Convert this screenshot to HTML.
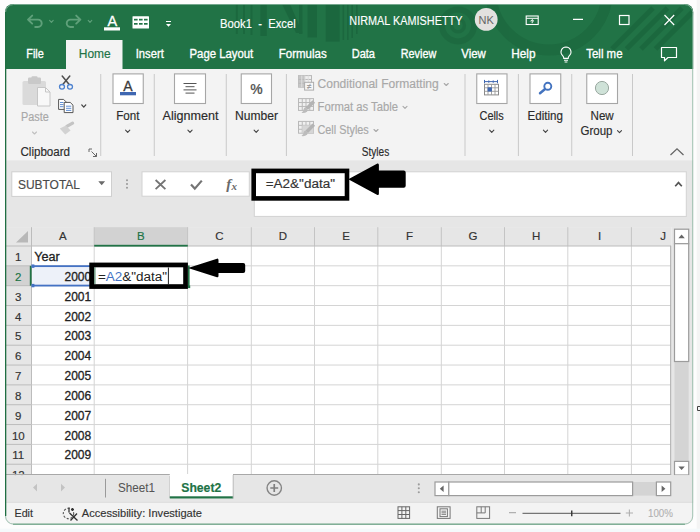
<!DOCTYPE html>
<html><head><meta charset="utf-8"><title>Book1 - Excel</title>
<style>
html,body{margin:0;padding:0;background:#fdfdfd;width:700px;height:532px;overflow:hidden}
svg{display:block;font-family:"Liberation Sans",sans-serif}
text{white-space:pre}
</style></head><body>
<svg width="700" height="532" viewBox="0 0 700 532">
<clipPath id="win"><rect x="5" y="4" width="688.2" height="520.6" rx="8"/></clipPath>
<g clip-path="url(#win)">
<rect x="0" y="0" width="700" height="532" fill="#f3f3f3" />
<rect x="0" y="0" width="700" height="69" fill="#217346" />
<g opacity="0.27">
<rect x="235.8" y="4" width="2" height="30" fill="#0e4a2a" />
<rect x="243" y="4" width="2" height="30" fill="#0e4a2a" />
<rect x="250.5" y="4" width="2" height="31" fill="#0e4a2a" />
<rect x="260.4" y="4" width="6.4" height="32" fill="#0e4a2a" />
<rect x="299" y="4" width="3.5" height="30" fill="#0e4a2a" />
<rect x="307.5" y="4" width="9.5" height="33.5" fill="#0e4a2a" />
<rect x="325.7" y="4" width="14" height="37.6" fill="#0e4a2a" />
<rect x="342.5" y="4" width="1.6" height="36" fill="#0e4a2a" />
<rect x="347" y="4" width="1.6" height="36" fill="#0e4a2a" />
<rect x="351.4" y="4" width="1.6" height="34" fill="#0e4a2a" />
<rect x="356" y="4" width="1.6" height="30" fill="#0e4a2a" />
<path d="M282 4 L290 4 L302.5 33 L296 33 Z" fill="#0e4a2a" />
</g>
<g fill="none" opacity="0.2">
<circle cx="458" cy="25.4" r="6.4" stroke="#0e4a2a" stroke-width="3.4"/>
<circle cx="458" cy="25.4" r="16" stroke="#0e4a2a" stroke-width="6"/>
<circle cx="549" cy="-8" r="58" stroke="#0e4a2a" stroke-width="11"/>
</g>
<g fill="none" opacity="0.27">
<line x1="612.0" y1="49" x2="653.0" y2="8" stroke="#0e4a2a" stroke-width="5.2" />
<line x1="626.5" y1="49" x2="667.5" y2="8" stroke="#0e4a2a" stroke-width="5.2" />
<line x1="641.0" y1="49" x2="682.0" y2="8" stroke="#0e4a2a" stroke-width="5.2" />
<line x1="655.5" y1="49" x2="696.5" y2="8" stroke="#0e4a2a" stroke-width="5.2" />
</g>
<path d="M28 19.6 L32.2 15.6 M28 19.6 L32.2 23.6 M28 19.6 H38 a3.7 3.7 0 0 1 0 7.4 H35.2" fill="none" stroke="#5fa07a" stroke-width="1.9" stroke-linecap="round" stroke-linejoin="round"/>
<path d="M49.6 20.3 L51.4 22.3 L53.199999999999996 20.3" fill="none" stroke="#5fa07a" stroke-width="1.1" stroke-linecap="round" stroke-linejoin="round"/>
<path d="M80.4 19.6 L76.2 15.6 M80.4 19.6 L76.2 23.6 M80.4 19.6 H70.4 a3.7 3.7 0 0 0 0 7.4 H73.2" fill="none" stroke="#5fa07a" stroke-width="1.9" stroke-linecap="round" stroke-linejoin="round"/>
<path d="M88.2 20.3 L90 22.3 L91.8 20.3" fill="none" stroke="#5fa07a" stroke-width="1.1" stroke-linecap="round" stroke-linejoin="round"/>
<text x="112.3" y="25.8" font-size="14.5" fill="#fff" stroke="#fff" stroke-width="0.3" text-anchor="middle" >A</text>
<rect x="104" y="27.3" width="16" height="3.2" fill="#fff" />
<rect x="132.5" y="16.2" width="16.5" height="12.4" fill="#fff" rx="0.6" />
<rect x="134" y="18.8" width="3.6" height="1.7" fill="#217346" />
<rect x="139" y="18.8" width="3.6" height="1.7" fill="#217346" />
<rect x="144" y="18.8" width="3.6" height="1.7" fill="#217346" />
<rect x="134" y="23.0" width="3.6" height="1.7" fill="#217346" />
<rect x="139" y="23.0" width="3.6" height="1.7" fill="#217346" />
<rect x="144" y="23.0" width="3.6" height="1.7" fill="#217346" />
<line x1="166" y1="21.5" x2="171" y2="21.5" stroke="#fff" stroke-width="1.2" />
<path d="M166 24 L171 24 L168.5 26.8 Z" fill="#fff" />
<text x="220" y="28" font-size="12" fill="#fff" stroke="#fff" stroke-width="0.12" textLength="75.75" lengthAdjust="spacingAndGlyphs" >Book1  -  Excel</text>
<text x="349.3" y="24.7" font-size="12" fill="#fff" stroke="#fff" stroke-width="0.12" textLength="113.2" lengthAdjust="spacingAndGlyphs" >NIRMAL KAMISHETTY</text>
<circle cx="486.2" cy="19.4" r="11.4" fill="#e3e1df"/>
<text x="486.2" y="23.6" font-size="11" fill="#666" text-anchor="middle" >NK</text>
<rect x="526.2" y="16" width="12" height="8.5" fill="none" stroke="#fff" stroke-width="1.1" />
<line x1="526.2" y1="18.3" x2="538.2" y2="18.3" stroke="#fff" stroke-width="1" />
<path d="M532.2 23.2 V19.8 M530.4 21.4 L532.2 19.6 L534 21.4" fill="none" stroke="#fff" stroke-width="1" />
<line x1="573" y1="19.3" x2="583" y2="19.3" stroke="#fff" stroke-width="1.2" />
<rect x="619.5" y="15.5" width="9.5" height="9" fill="none" stroke="#fff" stroke-width="1.2" />
<path d="M664.5 15 L674.2 25 M674.2 15 L664.5 25" fill="none" stroke="#fff" stroke-width="1.2" />
<rect x="66" y="40" width="56.5" height="30" fill="#f3f3f3" />
<text x="26.25" y="58.2" font-size="12" fill="#fff" stroke="#fff" stroke-width="0.32" textLength="17.5" lengthAdjust="spacingAndGlyphs" >File</text>
<text x="78.75" y="58.2" font-size="12" fill="#217346" stroke="#217346" stroke-width="0.16" textLength="32.0" lengthAdjust="spacingAndGlyphs" >Home</text>
<text x="135.75" y="58.2" font-size="12" fill="#fff" stroke="#fff" stroke-width="0.32" textLength="28.0" lengthAdjust="spacingAndGlyphs" >Insert</text>
<text x="189.5" y="58.2" font-size="12" fill="#fff" stroke="#fff" stroke-width="0.32" textLength="63.75" lengthAdjust="spacingAndGlyphs" >Page Layout</text>
<text x="278.75" y="58.2" font-size="12" fill="#fff" stroke="#fff" stroke-width="0.32" textLength="48.0" lengthAdjust="spacingAndGlyphs" >Formulas</text>
<text x="351.7" y="58.2" font-size="12" fill="#fff" stroke="#fff" stroke-width="0.32" textLength="23.3" lengthAdjust="spacingAndGlyphs" >Data</text>
<text x="400.75" y="58.2" font-size="12" fill="#fff" stroke="#fff" stroke-width="0.32" textLength="35.5" lengthAdjust="spacingAndGlyphs" >Review</text>
<text x="461.25" y="58.2" font-size="12" fill="#fff" stroke="#fff" stroke-width="0.32" textLength="24.5" lengthAdjust="spacingAndGlyphs" >View</text>
<text x="511.25" y="58.2" font-size="12" fill="#fff" stroke="#fff" stroke-width="0.32" textLength="24.25" lengthAdjust="spacingAndGlyphs" >Help</text>
<path d="M566 47 a5 5 0 0 1 3.2 8.8 c-0.8 0.8 -1 1.6 -1 2.6 h-4.4 c0 -1 -0.2 -1.8 -1 -2.6 a5 5 0 0 1 3.2 -8.8 Z M564 60.2 h4 M564.6 62 h2.8" fill="none" stroke="#fff" stroke-width="1.1" />
<text x="586.25" y="58.2" font-size="12" fill="#fff" stroke="#fff" stroke-width="0.32" textLength="36.25" lengthAdjust="spacingAndGlyphs" >Tell me</text>
<path d="M661.5 47.5 H676.5 V57.5 H668 L664.5 60.8 V57.5 H661.5 Z" fill="none" stroke="#fff" stroke-width="1.2" stroke-linejoin="round"/>
<rect x="0" y="69" width="700" height="92" fill="#f3f3f3" />
<line x1="100.75" y1="74" x2="100.75" y2="156" stroke="#c9c9c9" stroke-width="1" />
<line x1="154.25" y1="74" x2="154.25" y2="156" stroke="#c9c9c9" stroke-width="1" />
<line x1="226.25" y1="74" x2="226.25" y2="156" stroke="#c9c9c9" stroke-width="1" />
<line x1="286.4" y1="74" x2="286.4" y2="156" stroke="#c9c9c9" stroke-width="1" />
<line x1="465" y1="74" x2="465" y2="156" stroke="#c9c9c9" stroke-width="1" />
<line x1="518.4" y1="74" x2="518.4" y2="156" stroke="#c9c9c9" stroke-width="1" />
<line x1="571.75" y1="74" x2="571.75" y2="156" stroke="#c9c9c9" stroke-width="1" />
<line x1="632.5" y1="74" x2="632.5" y2="156" stroke="#c9c9c9" stroke-width="1" />
<rect x="22.5" y="81" width="23.5" height="24" fill="#dadada" rx="1.5" />
<rect x="28" y="77.5" width="13" height="6.5" fill="#c9c9c9" rx="1.2" />
<rect x="31.5" y="76.3" width="6" height="3" fill="#c9c9c9" rx="1" />
<path d="M37.5 87.5 H45.5 L50 92 V106 H37.5 Z" fill="#f8f8f8" stroke="#c6c6c6" stroke-width="1" />
<path d="M45.5 87.5 V92 H50" fill="none" stroke="#c6c6c6" stroke-width="1" />
<text x="21" y="121" font-size="12" fill="#a8a8a8" stroke="#a8a8a8" stroke-width="0.16" textLength="27.75" lengthAdjust="spacingAndGlyphs" >Paste</text>
<path d="M32.5 132.0 L34.5 134.0 L36.5 132.0" fill="none" stroke="#c0c0c0" stroke-width="1.1" stroke-linecap="round" stroke-linejoin="round"/>
<path d="M62.2 76 L69 84.2 M69.8 76 L63 84.2" fill="none" stroke="#4d4d4d" stroke-width="1.5" stroke-linecap="round"/>
<ellipse cx="62" cy="86.8" rx="2.5" ry="2.3" fill="none" stroke="#4f83cf" stroke-width="1.3"/>
<ellipse cx="70" cy="86.8" rx="2.5" ry="2.3" fill="none" stroke="#4f83cf" stroke-width="1.3"/>
<path d="M58.6 99.4 H63.6 L66 101.8 V109.4 H58.6 Z" fill="#fff" stroke="#555" stroke-width="1" />
<line x1="60" y1="102.5" x2="63.5" y2="102.5" stroke="#4f83cf" stroke-width="0.9" />
<line x1="60" y1="104.6" x2="63.5" y2="104.6" stroke="#4f83cf" stroke-width="0.9" />
<line x1="60" y1="106.7" x2="63.5" y2="106.7" stroke="#4f83cf" stroke-width="0.9" />
<path d="M64.2 102.4 H70.2 L73 105.2 V112.6 H64.2 Z" fill="#fff" stroke="#555" stroke-width="1" />
<line x1="66" y1="106.2" x2="71.3" y2="106.2" stroke="#4f83cf" stroke-width="0.9" />
<line x1="66" y1="108.3" x2="71.3" y2="108.3" stroke="#4f83cf" stroke-width="0.9" />
<line x1="66" y1="110.4" x2="71.3" y2="110.4" stroke="#4f83cf" stroke-width="0.9" />
<path d="M81.75 104.9 L83.75 107.1 L85.75 104.9" fill="none" stroke="#444" stroke-width="1.3" stroke-linecap="round" stroke-linejoin="round"/>
<line x1="66.8" y1="126.4" x2="72.6" y2="123.2" stroke="#c4c4c4" stroke-width="3.2" stroke-linecap="round"/>
<path d="M59.8 128.6 L66 125.4 L70.6 130.4 L65.2 134.6 Z" fill="#d2d2d2" />
<text x="20.5" y="156.2" font-size="12" fill="#2b2b2b" stroke="#2b2b2b" stroke-width="0.16" textLength="49.5" lengthAdjust="spacingAndGlyphs" >Clipboard</text>
<path d="M89 149 H92 M89 149 V152 M91.5 151.5 L96.5 156.5 M96.5 153 V156.5 H93" fill="none" stroke="#666" stroke-width="1" />
<rect x="113.0" y="73.9" width="30.25" height="29.6" fill="#fff" stroke="#a6a6a6" stroke-width="1.1" />
<text x="116.25" y="120.2" font-size="12" fill="#2b2b2b" stroke="#2b2b2b" stroke-width="0.16" textLength="23.25" lengthAdjust="spacingAndGlyphs" >Font</text>
<path d="M125.60000000000001 130.1 L127.7 132.29999999999998 L129.8 130.1" fill="none" stroke="#444" stroke-width="1.1" stroke-linecap="round" stroke-linejoin="round"/>
<text x="128" y="90.6" font-size="14" fill="#3a3a3a" stroke="#3a3a3a" stroke-width="0.3" text-anchor="middle" >A</text>
<rect x="120" y="92" width="16" height="3.3" fill="#3f67b1" />
<rect x="174.5" y="73.9" width="31" height="29.6" fill="#fff" stroke="#a6a6a6" stroke-width="1.1" />
<text x="162.5" y="120.2" font-size="12" fill="#2b2b2b" stroke="#2b2b2b" stroke-width="0.16" textLength="56.0" lengthAdjust="spacingAndGlyphs" >Alignment</text>
<path d="M187.9 130.1 L190 132.29999999999998 L192.1 130.1" fill="none" stroke="#444" stroke-width="1.1" stroke-linecap="round" stroke-linejoin="round"/>
<line x1="183.5" y1="83.5" x2="196.5" y2="83.5" stroke="#555" stroke-width="1" />
<line x1="185.5" y1="86.7" x2="194.5" y2="86.7" stroke="#555" stroke-width="1" />
<line x1="183.5" y1="89.9" x2="196.5" y2="89.9" stroke="#555" stroke-width="1" />
<line x1="185.5" y1="93.1" x2="194.5" y2="93.1" stroke="#555" stroke-width="1" />
<rect x="241.25" y="73.9" width="30.25" height="29.6" fill="#fff" stroke="#a6a6a6" stroke-width="1.1" />
<text x="235" y="120.2" font-size="12" fill="#2b2b2b" stroke="#2b2b2b" stroke-width="0.16" textLength="43" lengthAdjust="spacingAndGlyphs" >Number</text>
<path d="M254.1 130.1 L256.2 132.29999999999998 L258.3 130.1" fill="none" stroke="#444" stroke-width="1.1" stroke-linecap="round" stroke-linejoin="round"/>
<text x="256.6" y="94" font-size="14" fill="#5c5c5c" font-weight="bold" text-anchor="middle" >%</text>
<rect x="298.5" y="75.6" width="13" height="11.6" fill="#f0f0f0" stroke="#b9b9b9" stroke-width="1" />
<rect x="298.5" y="75.6" width="6.5" height="11.6" fill="#c6c6c6" />
<line x1="298.5" y1="79.46666666666665" x2="311.5" y2="79.46666666666665" stroke="#b9b9b9" stroke-width="1" />
<line x1="298.5" y1="83.33333333333333" x2="311.5" y2="83.33333333333333" stroke="#b9b9b9" stroke-width="1" />
<line x1="301.75" y1="75.6" x2="301.75" y2="87.19999999999999" stroke="#dedede" stroke-width="1" />
<line x1="305.0" y1="75.6" x2="305.0" y2="87.19999999999999" stroke="#dedede" stroke-width="1" />
<line x1="308.25" y1="75.6" x2="308.25" y2="87.19999999999999" stroke="#dedede" stroke-width="1" />
<rect x="304.6" y="82.3" width="9" height="7.8" fill="#f6f6f6" stroke="#adadad" stroke-width="1" />
<text x="309.1" y="89.2" font-size="8" fill="#9a9a9a" stroke="#9a9a9a" stroke-width="0.2" text-anchor="middle" >≠</text>
<rect x="298.5" y="98.6" width="15" height="11.8" fill="#f0f0f0" stroke="#b9b9b9" stroke-width="1" />
<line x1="298.5" y1="102.53333333333333" x2="313.5" y2="102.53333333333333" stroke="#b9b9b9" stroke-width="1" />
<line x1="298.5" y1="106.46666666666667" x2="313.5" y2="106.46666666666667" stroke="#b9b9b9" stroke-width="1" />
<line x1="302.25" y1="98.6" x2="302.25" y2="110.39999999999999" stroke="#b9b9b9" stroke-width="1" />
<line x1="306.0" y1="98.6" x2="306.0" y2="110.39999999999999" stroke="#b9b9b9" stroke-width="1" />
<line x1="309.75" y1="98.6" x2="309.75" y2="110.39999999999999" stroke="#b9b9b9" stroke-width="1" />
<path d="M312.5 100.3 L315.1 102.7 L308.0 109.8 L305.5 107.5 Z" fill="#b4b4b4" />
<path d="M306.1 107.7 Q308.3 109.3 307.1 111.7 Q304.5 113.5 301.5 112.89999999999999 Q303.9 110.7 303.7 108.89999999999999 Q304.5 107.3 306.1 107.7 Z" fill="#bcbcbc" />
<rect x="298.5" y="121.4" width="15" height="11.8" fill="#f0f0f0" stroke="#b9b9b9" stroke-width="1" />
<line x1="298.5" y1="125.33333333333334" x2="313.5" y2="125.33333333333334" stroke="#b9b9b9" stroke-width="1" />
<line x1="298.5" y1="129.26666666666668" x2="313.5" y2="129.26666666666668" stroke="#b9b9b9" stroke-width="1" />
<line x1="302.25" y1="121.4" x2="302.25" y2="133.20000000000002" stroke="#b9b9b9" stroke-width="1" />
<line x1="306.0" y1="121.4" x2="306.0" y2="133.20000000000002" stroke="#b9b9b9" stroke-width="1" />
<line x1="309.75" y1="121.4" x2="309.75" y2="133.20000000000002" stroke="#b9b9b9" stroke-width="1" />
<rect x="302.3" y="125.4" width="11.2" height="7.8" fill="#d6d6d6" />
<path d="M312.5 123.4 L315.1 125.80000000000001 L308.0 132.9 L305.5 130.6 Z" fill="#b4b4b4" />
<path d="M306.1 130.8 Q308.3 132.4 307.1 134.8 Q304.5 136.6 301.5 136.0 Q303.9 133.8 303.7 132.0 Q304.5 130.4 306.1 130.8 Z" fill="#bcbcbc" />
<text x="317.5" y="87.7" font-size="12" fill="#a8a8a8" stroke="#a8a8a8" stroke-width="0.16" textLength="121.25" lengthAdjust="spacingAndGlyphs" >Conditional Formatting</text>
<path d="M444.25 83.5 L446.25 85.5 L448.25 83.5" fill="none" stroke="#a8a8a8" stroke-width="1.1" stroke-linecap="round" stroke-linejoin="round"/>
<text x="317.5" y="110.6" font-size="12" fill="#a8a8a8" stroke="#a8a8a8" stroke-width="0.16" textLength="80.5" lengthAdjust="spacingAndGlyphs" >Format as Table</text>
<path d="M403.0 106.3 L405 108.3 L407.0 106.3" fill="none" stroke="#a8a8a8" stroke-width="1.1" stroke-linecap="round" stroke-linejoin="round"/>
<text x="317.5" y="133.8" font-size="12" fill="#a8a8a8" stroke="#a8a8a8" stroke-width="0.16" textLength="51.25" lengthAdjust="spacingAndGlyphs" >Cell Styles</text>
<path d="M374.0 129.5 L376 131.5 L378.0 129.5" fill="none" stroke="#a8a8a8" stroke-width="1.1" stroke-linecap="round" stroke-linejoin="round"/>
<text x="361.75" y="156.2" font-size="12" fill="#2b2b2b" stroke="#2b2b2b" stroke-width="0.16" textLength="27.5" lengthAdjust="spacingAndGlyphs" >Styles</text>
<rect x="476.75" y="73.9" width="30.25" height="29.6" fill="#fff" stroke="#a6a6a6" stroke-width="1.1" />
<text x="479.5" y="120.2" font-size="12" fill="#2b2b2b" stroke="#2b2b2b" stroke-width="0.16" textLength="24.25" lengthAdjust="spacingAndGlyphs" >Cells</text>
<path d="M489.65 130.1 L491.75 132.29999999999998 L493.85 130.1" fill="none" stroke="#444" stroke-width="1.1" stroke-linecap="round" stroke-linejoin="round"/>
<path d="M484.5 81.6 H497.5 M484.5 79.9 V83.3 M497.5 79.9 V83.3 M488.8 80.4 V82.8 M493.2 80.4 V82.8" fill="none" stroke="#3f67b1" stroke-width="1" />
<rect x="484.5" y="84.3" width="14" height="10.6" fill="#fff" stroke="#8a8a8a" stroke-width="1" />
<line x1="484.5" y1="87.8" x2="498.5" y2="87.8" stroke="#9a9a9a" stroke-width="0.9" />
<line x1="484.5" y1="91.3" x2="498.5" y2="91.3" stroke="#9a9a9a" stroke-width="0.9" />
<line x1="488" y1="84.3" x2="488" y2="94.9" stroke="#9a9a9a" stroke-width="0.9" />
<line x1="491.5" y1="84.3" x2="491.5" y2="94.9" stroke="#9a9a9a" stroke-width="0.9" />
<line x1="495" y1="84.3" x2="495" y2="94.9" stroke="#9a9a9a" stroke-width="0.9" />
<rect x="487.6" y="87.3" width="4.3" height="4.2" fill="#3f67b1" />
<rect x="530.0" y="73.9" width="30.75" height="29.6" fill="#fff" stroke="#a6a6a6" stroke-width="1.1" />
<text x="527.5" y="120.2" font-size="12" fill="#2b2b2b" stroke="#2b2b2b" stroke-width="0.16" textLength="35.5" lengthAdjust="spacingAndGlyphs" >Editing</text>
<path d="M543.4 130.1 L545.5 132.29999999999998 L547.6 130.1" fill="none" stroke="#444" stroke-width="1.1" stroke-linecap="round" stroke-linejoin="round"/>
<circle cx="547.8" cy="86.3" r="3.5" fill="none" stroke="#4373bf" stroke-width="1.9"/>
<line x1="544.8" y1="89.3" x2="540" y2="93.2" stroke="#4373bf" stroke-width="2.5" stroke-linecap="round"/>
<rect x="586.75" y="73.9" width="30.75" height="29.6" fill="#fff" stroke="#a6a6a6" stroke-width="1.1" />
<circle cx="602" cy="88" r="6.6" fill="#cfe2d8" stroke="#9aa8a0" stroke-width="1"/>
<text x="590.5" y="120.2" font-size="12" fill="#2b2b2b" stroke="#2b2b2b" stroke-width="0.16" textLength="23.25" lengthAdjust="spacingAndGlyphs" >New</text>
<text x="580.5" y="135.3" font-size="12" fill="#2b2b2b" stroke="#2b2b2b" stroke-width="0.16" textLength="32.0" lengthAdjust="spacingAndGlyphs" >Group</text>
<path d="M617.5 130.6 L619.5 132.6 L621.5 130.6" fill="none" stroke="#444" stroke-width="1.1" stroke-linecap="round" stroke-linejoin="round"/>
<path d="M670.5 155 L677 148.8 L683.5 155" fill="none" stroke="#666" stroke-width="1.3" />
<rect x="0" y="160.4" width="700" height="66.8" fill="#e6e6e6" />
<rect x="11.8" y="171.8" width="99.7" height="24.6" fill="#fff" stroke="#cfcfcf" stroke-width="1" />
<text x="17.9" y="188.5" font-size="12" fill="#4a4a4a" stroke="#4a4a4a" stroke-width="0.16" textLength="62.1" lengthAdjust="spacingAndGlyphs" >SUBTOTAL</text>
<path d="M98.3 181.3 H105.1 L101.7 185.3 Z" fill="#6a6a6a" />
<circle cx="127" cy="180.2" r="1.05" fill="#9c9c9c"/>
<circle cx="127" cy="184" r="1.05" fill="#9c9c9c"/>
<circle cx="127" cy="187.8" r="1.05" fill="#9c9c9c"/>
<rect x="142" y="171.8" width="107.3" height="24.4" fill="#fff" stroke="#d2d2d2" stroke-width="1" />
<path d="M155.6 180 L165.4 189.2 M165.4 180 L155.6 189.2" fill="none" stroke="#747474" stroke-width="1.8" />
<path d="M191 184.6 L194.8 188.6 L201.8 180.6" fill="none" stroke="#747474" stroke-width="2.2" />
<text x="226.2" y="188.6" font-size="15" fill="#6a6a6a" font-family="Liberation Serif" font-style="italic" font-weight="bold">f</text>
<text x="231.4" y="189.8" font-size="11" fill="#6a6a6a" font-family="Liberation Serif" font-style="italic" font-weight="bold">x</text>
<rect x="254.3" y="171.8" width="432" height="44.6" fill="#fff" stroke="#d2d2d2" stroke-width="1" />
<text x="265.7" y="188.3" font-size="12.5" fill="#333" stroke="#333" stroke-width="0.16" textLength="69.3" lengthAdjust="spacingAndGlyphs" >=A2&amp;"data"</text>
<path d="M675.2 186.2 L678.5 182.6 L681.8 186.2" fill="none" stroke="#555" stroke-width="1.7" />
<rect x="253.7" y="170.9" width="93.3" height="27.5" fill="none" stroke="#000" stroke-width="4.6" />
<path d="M348.3 179.2 L377.40000000000003 163.5 Q378.90000000000003 163.0 378.90000000000003 165.0 L378.90000000000003 170.6 L403.7 170.6 Q405.7 170.6 405.7 172.6 L405.7 185.79999999999998 Q405.7 187.79999999999998 403.7 187.79999999999998 L378.90000000000003 187.79999999999998 L378.90000000000003 193.39999999999998 Q378.90000000000003 195.39999999999998 377.40000000000003 194.89999999999998 Z" fill="#000" />
<rect x="5" y="227.2" width="666" height="18.80000000000001" fill="#e6e6e6" />
<rect x="31.5" y="246" width="639.5" height="228.5" fill="#fff" />
<rect x="5" y="246" width="26.5" height="228.5" fill="#e6e6e6" />
<rect x="94.2" y="227.2" width="93.4" height="18.80000000000001" fill="#d2d2d2" />
<rect x="5" y="265.84" width="26.5" height="19.84" fill="#d2d2d2" />
<line x1="94.2" y1="246" x2="94.2" y2="474.5" stroke="#d4d4d4" stroke-width="1" />
<line x1="94.2" y1="227.2" x2="94.2" y2="246" stroke="#c4c4c4" stroke-width="1" />
<line x1="187.6" y1="246" x2="187.6" y2="474.5" stroke="#d4d4d4" stroke-width="1" />
<line x1="187.6" y1="227.2" x2="187.6" y2="246" stroke="#c4c4c4" stroke-width="1" />
<line x1="251.3" y1="246" x2="251.3" y2="474.5" stroke="#d4d4d4" stroke-width="1" />
<line x1="251.3" y1="227.2" x2="251.3" y2="246" stroke="#c4c4c4" stroke-width="1" />
<line x1="314.5" y1="246" x2="314.5" y2="474.5" stroke="#d4d4d4" stroke-width="1" />
<line x1="314.5" y1="227.2" x2="314.5" y2="246" stroke="#c4c4c4" stroke-width="1" />
<line x1="377.8" y1="246" x2="377.8" y2="474.5" stroke="#d4d4d4" stroke-width="1" />
<line x1="377.8" y1="227.2" x2="377.8" y2="246" stroke="#c4c4c4" stroke-width="1" />
<line x1="441.3" y1="246" x2="441.3" y2="474.5" stroke="#d4d4d4" stroke-width="1" />
<line x1="441.3" y1="227.2" x2="441.3" y2="246" stroke="#c4c4c4" stroke-width="1" />
<line x1="504.5" y1="246" x2="504.5" y2="474.5" stroke="#d4d4d4" stroke-width="1" />
<line x1="504.5" y1="227.2" x2="504.5" y2="246" stroke="#c4c4c4" stroke-width="1" />
<line x1="567.8" y1="246" x2="567.8" y2="474.5" stroke="#d4d4d4" stroke-width="1" />
<line x1="567.8" y1="227.2" x2="567.8" y2="246" stroke="#c4c4c4" stroke-width="1" />
<line x1="631.4" y1="246" x2="631.4" y2="474.5" stroke="#d4d4d4" stroke-width="1" />
<line x1="631.4" y1="227.2" x2="631.4" y2="246" stroke="#c4c4c4" stroke-width="1" />
<line x1="31.5" y1="227.2" x2="31.5" y2="474.5" stroke="#bcbcbc" stroke-width="1" />
<line x1="31.5" y1="265.84" x2="671" y2="265.84" stroke="#d4d4d4" stroke-width="1" />
<line x1="5" y1="265.84" x2="31.5" y2="265.84" stroke="#bcbcbc" stroke-width="1" />
<line x1="31.5" y1="285.68" x2="671" y2="285.68" stroke="#d4d4d4" stroke-width="1" />
<line x1="5" y1="285.68" x2="31.5" y2="285.68" stroke="#bcbcbc" stroke-width="1" />
<line x1="31.5" y1="305.52" x2="671" y2="305.52" stroke="#d4d4d4" stroke-width="1" />
<line x1="5" y1="305.52" x2="31.5" y2="305.52" stroke="#bcbcbc" stroke-width="1" />
<line x1="31.5" y1="325.36" x2="671" y2="325.36" stroke="#d4d4d4" stroke-width="1" />
<line x1="5" y1="325.36" x2="31.5" y2="325.36" stroke="#bcbcbc" stroke-width="1" />
<line x1="31.5" y1="345.2" x2="671" y2="345.2" stroke="#d4d4d4" stroke-width="1" />
<line x1="5" y1="345.2" x2="31.5" y2="345.2" stroke="#bcbcbc" stroke-width="1" />
<line x1="31.5" y1="365.03999999999996" x2="671" y2="365.03999999999996" stroke="#d4d4d4" stroke-width="1" />
<line x1="5" y1="365.03999999999996" x2="31.5" y2="365.03999999999996" stroke="#bcbcbc" stroke-width="1" />
<line x1="31.5" y1="384.88" x2="671" y2="384.88" stroke="#d4d4d4" stroke-width="1" />
<line x1="5" y1="384.88" x2="31.5" y2="384.88" stroke="#bcbcbc" stroke-width="1" />
<line x1="31.5" y1="404.72" x2="671" y2="404.72" stroke="#d4d4d4" stroke-width="1" />
<line x1="5" y1="404.72" x2="31.5" y2="404.72" stroke="#bcbcbc" stroke-width="1" />
<line x1="31.5" y1="424.56" x2="671" y2="424.56" stroke="#d4d4d4" stroke-width="1" />
<line x1="5" y1="424.56" x2="31.5" y2="424.56" stroke="#bcbcbc" stroke-width="1" />
<line x1="31.5" y1="444.4" x2="671" y2="444.4" stroke="#d4d4d4" stroke-width="1" />
<line x1="5" y1="444.4" x2="31.5" y2="444.4" stroke="#bcbcbc" stroke-width="1" />
<line x1="31.5" y1="464.24" x2="671" y2="464.24" stroke="#d4d4d4" stroke-width="1" />
<line x1="5" y1="464.24" x2="31.5" y2="464.24" stroke="#bcbcbc" stroke-width="1" />
<line x1="5" y1="246" x2="671" y2="246" stroke="#bcbcbc" stroke-width="1" />
<path d="M16 242.5 L28 242.5 L28 231 Z" fill="#b8b8b8" />
<text x="62.85" y="240.2" font-size="11.5" fill="#333" stroke="#333" stroke-width="0.16" text-anchor="middle" >A</text>
<text x="140.9" y="240.2" font-size="11.5" fill="#217346" stroke="#217346" stroke-width="0.16" text-anchor="middle" >B</text>
<text x="219.45" y="240.2" font-size="11.5" fill="#333" stroke="#333" stroke-width="0.16" text-anchor="middle" >C</text>
<text x="282.9" y="240.2" font-size="11.5" fill="#333" stroke="#333" stroke-width="0.16" text-anchor="middle" >D</text>
<text x="346.15" y="240.2" font-size="11.5" fill="#333" stroke="#333" stroke-width="0.16" text-anchor="middle" >E</text>
<text x="409.55" y="240.2" font-size="11.5" fill="#333" stroke="#333" stroke-width="0.16" text-anchor="middle" >F</text>
<text x="472.9" y="240.2" font-size="11.5" fill="#333" stroke="#333" stroke-width="0.16" text-anchor="middle" >G</text>
<text x="536.15" y="240.2" font-size="11.5" fill="#333" stroke="#333" stroke-width="0.16" text-anchor="middle" >H</text>
<text x="599.5999999999999" y="240.2" font-size="11.5" fill="#333" stroke="#333" stroke-width="0.16" text-anchor="middle" >I</text>
<text x="663.2" y="240.2" font-size="11.5" fill="#333" stroke="#333" stroke-width="0.16" text-anchor="middle" >J</text>
<rect x="94.2" y="244.8" width="93.6" height="1.8" fill="#217346" />
<rect x="29.8" y="265.84" width="1.8" height="19.84" fill="#217346" />
<text x="18.3" y="261.0" font-size="11.5" fill="#333" stroke="#333" stroke-width="0.16" text-anchor="middle" >1</text>
<text x="18.3" y="280.84" font-size="11.5" fill="#217346" stroke="#217346" stroke-width="0.16" text-anchor="middle" >2</text>
<text x="18.3" y="300.68" font-size="11.5" fill="#333" stroke="#333" stroke-width="0.16" text-anchor="middle" >3</text>
<text x="18.3" y="320.52" font-size="11.5" fill="#333" stroke="#333" stroke-width="0.16" text-anchor="middle" >4</text>
<text x="18.3" y="340.36" font-size="11.5" fill="#333" stroke="#333" stroke-width="0.16" text-anchor="middle" >5</text>
<text x="18.3" y="360.2" font-size="11.5" fill="#333" stroke="#333" stroke-width="0.16" text-anchor="middle" >6</text>
<text x="18.3" y="380.03999999999996" font-size="11.5" fill="#333" stroke="#333" stroke-width="0.16" text-anchor="middle" >7</text>
<text x="18.3" y="399.88" font-size="11.5" fill="#333" stroke="#333" stroke-width="0.16" text-anchor="middle" >8</text>
<text x="18.3" y="419.72" font-size="11.5" fill="#333" stroke="#333" stroke-width="0.16" text-anchor="middle" >9</text>
<text x="18.3" y="439.56" font-size="11.5" fill="#333" stroke="#333" stroke-width="0.16" text-anchor="middle" >10</text>
<text x="18.3" y="459.4" font-size="11.5" fill="#333" stroke="#333" stroke-width="0.16" text-anchor="middle" >11</text>
<text x="18.3" y="479.24" font-size="11.5" fill="#333" stroke="#333" stroke-width="0.16" text-anchor="middle" >12</text>
<text x="34.3" y="260.8" font-size="12" fill="#222" stroke="#222" stroke-width="0.3" textLength="25.5" lengthAdjust="spacingAndGlyphs" >Year</text>
<text x="91.2" y="280.84" font-size="12" fill="#222" stroke="#222" stroke-width="0.3" text-anchor="end" >2000</text>
<text x="91.2" y="300.68" font-size="12" fill="#222" stroke="#222" stroke-width="0.3" text-anchor="end" >2001</text>
<text x="91.2" y="320.52" font-size="12" fill="#222" stroke="#222" stroke-width="0.3" text-anchor="end" >2002</text>
<text x="91.2" y="340.36" font-size="12" fill="#222" stroke="#222" stroke-width="0.3" text-anchor="end" >2003</text>
<text x="91.2" y="360.2" font-size="12" fill="#222" stroke="#222" stroke-width="0.3" text-anchor="end" >2004</text>
<text x="91.2" y="380.03999999999996" font-size="12" fill="#222" stroke="#222" stroke-width="0.3" text-anchor="end" >2005</text>
<text x="91.2" y="399.88" font-size="12" fill="#222" stroke="#222" stroke-width="0.3" text-anchor="end" >2006</text>
<text x="91.2" y="419.72" font-size="12" fill="#222" stroke="#222" stroke-width="0.3" text-anchor="end" >2007</text>
<text x="91.2" y="439.56" font-size="12" fill="#222" stroke="#222" stroke-width="0.3" text-anchor="end" >2008</text>
<text x="91.2" y="459.4" font-size="12" fill="#222" stroke="#222" stroke-width="0.3" text-anchor="end" >2009</text>
<rect x="32.2" y="266.34" width="62" height="19.24" fill="#edf1f9" />
<text x="91.2" y="280.84" font-size="12" fill="#222" stroke="#222" stroke-width="0.3" text-anchor="end" >2000</text>
<rect x="32" y="265.23999999999995" width="62.4" height="1.8" fill="#4472c4" />
<rect x="32" y="284.67999999999995" width="62.4" height="1.8" fill="#4472c4" />
<rect x="31.4" y="264.44" width="3" height="3.4" fill="#4472c4" />
<rect x="31.4" y="283.87999999999994" width="3" height="3.4" fill="#4472c4" />
<rect x="94.6" y="266.34" width="93" height="18.84" fill="#fff" />
<rect x="188" y="265.5" width="1.6" height="21.5" fill="#217346" />
<rect x="187.6" y="285.5" width="2.6" height="2.6" fill="#217346" />
<text x="97.9" y="281.2" font-size="12.5" fill="#222" textLength="69.2" lengthAdjust="spacingAndGlyphs">=<tspan fill="#4472c4">A2</tspan>&amp;"data"</text>
<line x1="168.4" y1="267.5" x2="168.4" y2="284.3" stroke="#222" stroke-width="1" />
<line x1="94.9" y1="267.3" x2="94.9" y2="284.3" stroke="#2a6b47" stroke-width="1" />
<rect x="91.65" y="264.95" width="93.9" height="21.6" fill="none" stroke="#000" stroke-width="4.7" />
<path d="M188 267.9 L217.0 258.65 Q218.5 258.15 218.5 260.15 L218.5 262.9 L243.2 262.9 Q245.2 262.9 245.2 264.9 L245.2 270.9 Q245.2 272.9 243.2 272.9 L218.5 272.9 L218.5 275.65 Q218.5 277.65 217.0 277.15 Z" fill="#000" />
<line x1="5" y1="474.5" x2="671.5" y2="474.5" stroke="#a8a8a8" stroke-width="1.2" />
<line x1="670.8" y1="245.7" x2="670.8" y2="474.5" stroke="#b2b2b2" stroke-width="1.4" />
<rect x="671.5" y="227.2" width="30" height="248.3" fill="#e6e6e6" />
<rect x="674.5" y="229.2" width="14.2" height="232" fill="#d4d4d4" />
<rect x="674.5" y="229.2" width="14.2" height="14.5" fill="#fff" stroke="#9a9a9a" stroke-width="1.2" />
<path d="M678.4 238.2 H684.8 L681.6 234.6 Z" fill="#666" />
<rect x="674.5" y="243.7" width="14.2" height="117.8" fill="#fff" stroke="#9c9c9c" stroke-width="1.2" />
<rect x="674.5" y="461.4" width="14.2" height="13.6" fill="#fff" stroke="#9c9c9c" stroke-width="1.2" />
<path d="M678.4 466.4 H684.8 L681.6 470 Z" fill="#666" />
<rect x="5" y="475.1" width="690" height="27.2" fill="#e6e6e6" />
<path d="M37 483.8 L33 487.6 L37 491.4 Z" fill="#c3c3c3" />
<path d="M61 483.8 L65 487.6 L61 491.4 Z" fill="#c3c3c3" />
<line x1="105.5" y1="478.8" x2="105.5" y2="497.5" stroke="#9a9a9a" stroke-width="1" />
<text x="118" y="492.2" font-size="12" fill="#555" stroke="#555" stroke-width="0.05" textLength="37" lengthAdjust="spacingAndGlyphs" >Sheet1</text>
<line x1="169.5" y1="476" x2="169.5" y2="498" stroke="#c6c6c6" stroke-width="1" />
<rect x="169.8" y="474" width="63.2" height="24.5" fill="#fff" />
<rect x="169.8" y="496.3" width="63.4" height="2.2" fill="#217346" />
<line x1="233.2" y1="475" x2="233.2" y2="498.5" stroke="#bcbcbc" stroke-width="1" />
<text x="181.25" y="492.2" font-size="12" fill="#217346" stroke="#217346" stroke-width="0.16" textLength="40.0" lengthAdjust="spacingAndGlyphs" font-weight="bold" >Sheet2</text>
<circle cx="274.25" cy="488" r="7.2" fill="none" stroke="#858585" stroke-width="1.4"/>
<path d="M270.3 488 H278.2 M274.25 484.1 V491.9" fill="none" stroke="#808080" stroke-width="1.7" />
<circle cx="418.8" cy="484.4" r="1.05" fill="#9c9c9c"/>
<circle cx="418.8" cy="488.3" r="1.05" fill="#9c9c9c"/>
<circle cx="418.8" cy="492.2" r="1.05" fill="#9c9c9c"/>
<rect x="435" y="482" width="236" height="13.6" fill="#d4d4d4" />
<rect x="435" y="482" width="13.8" height="13.6" fill="#fff" stroke="#9c9c9c" stroke-width="1.2" />
<path d="M443.6 485.4 V492 L439.8 488.7 Z" fill="#666" />
<rect x="448.8" y="482" width="183.8" height="13.6" fill="#fff" stroke="#9c9c9c" stroke-width="1.2" />
<rect x="656.4" y="482" width="14.3" height="13.6" fill="#fff" stroke="#9c9c9c" stroke-width="1.2" />
<path d="M661.6 485.4 V492 L665.4 488.7 Z" fill="#666" />
<rect x="5" y="502.3" width="690" height="23" fill="#f3f3f3" />
<line x1="5" y1="502.3" x2="695" y2="502.3" stroke="#dcdcdc" stroke-width="1" />
<text x="14.5" y="517.2" font-size="11.5" fill="#333" stroke="#333" stroke-width="0.16" textLength="18.5" lengthAdjust="spacingAndGlyphs" >Edit</text>
<circle cx="68.5" cy="513.5" r="5.2" fill="none" stroke="#555" stroke-width="1.1" stroke-dasharray="2.2 1.6"/>
<path d="M69 507.5 V512.5 M71 509.5 h3 M72.5 508 v3 M69.5 513 L77.5 520.5 M77 513.5 L70.5 520.5" fill="none" stroke="#333" stroke-width="1.3" />
<text x="81.75" y="517.2" font-size="11.5" fill="#333" stroke="#333" stroke-width="0.16" textLength="120.25" lengthAdjust="spacingAndGlyphs" >Accessibility: Investigate</text>
<rect x="398" y="506.8" width="11.6" height="11.6" fill="none" stroke="#666" stroke-width="1" />
<line x1="398" y1="510.6" x2="409.6" y2="510.6" stroke="#666" stroke-width="1" />
<line x1="398" y1="514.5" x2="409.6" y2="514.5" stroke="#666" stroke-width="1" />
<line x1="401.9" y1="506.8" x2="401.9" y2="518.4" stroke="#666" stroke-width="1" />
<line x1="405.8" y1="506.8" x2="405.8" y2="518.4" stroke="#666" stroke-width="1" />
<rect x="437.3" y="506.8" width="12.8" height="11.6" fill="none" stroke="#777" stroke-width="1" />
<rect x="440" y="508.8" width="7.4" height="7.8" fill="none" stroke="#777" stroke-width="1" />
<line x1="441.5" y1="511.2" x2="446" y2="511.2" stroke="#777" stroke-width="0.9" />
<line x1="441.5" y1="512.8" x2="446" y2="512.8" stroke="#777" stroke-width="0.9" />
<line x1="441.5" y1="514.4" x2="446" y2="514.4" stroke="#777" stroke-width="0.9" />
<rect x="476.8" y="506.8" width="12.8" height="11.6" fill="none" stroke="#777" stroke-width="1" />
<path d="M476.8 512.9 H485.2 V506.8 M481.2 506.8 V512.9" fill="none" stroke="#777" stroke-width="1" />
<line x1="509" y1="512.6" x2="516" y2="512.6" stroke="#b0b0b0" stroke-width="1.2" />
<line x1="522.5" y1="513.3" x2="620.5" y2="513.3" stroke="#555" stroke-width="1" />
<line x1="571.75" y1="510.5" x2="571.75" y2="516.3" stroke="#333" stroke-width="1.4" />
<path d="M625.8 513 H633 M629.4 509.4 V516.6" fill="none" stroke="#b0b0b0" stroke-width="1.1" />
<text x="648" y="517.3" font-size="11.5" fill="#b0b0b0" stroke="#b0b0b0" stroke-width="0.1" textLength="25" lengthAdjust="spacingAndGlyphs" >100%</text>
</g>
<rect x="5.5" y="4.5" width="687.2" height="519.6" rx="8" fill="none" stroke="#8ab59f" stroke-width="0.8"/>
<line x1="5.65" y1="12" x2="5.65" y2="516" stroke="#1f6e42" stroke-width="1.3" />
<line x1="13" y1="524.2" x2="685" y2="524.2" stroke="#3d8560" stroke-width="0.7" />
<rect x="696.6" y="0" width="3.4" height="532" fill="#f4f4f4" />
<rect x="0" y="528.6" width="700" height="3.4" fill="#f5f9fb" />
<path d="M700 406.5 H697.5 V410.5 H700" fill="none" stroke="#444" stroke-width="1" />
</svg>
</body></html>
